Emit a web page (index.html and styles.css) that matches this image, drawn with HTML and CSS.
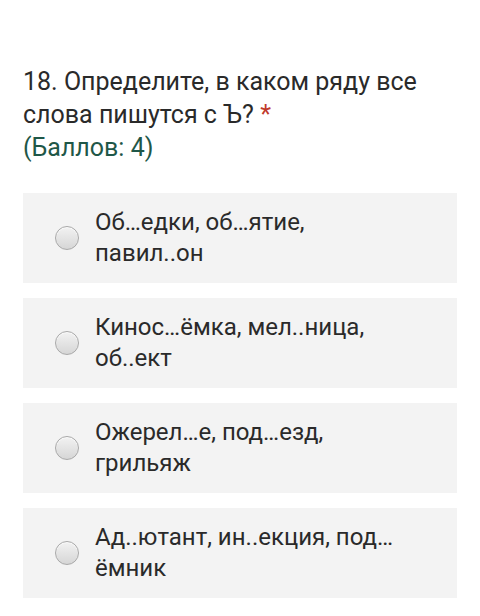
FILE: index.html
```html
<!DOCTYPE html>
<html lang="ru">
<head>
<meta charset="utf-8">
<link rel="stylesheet" href="styles.css">
</head>
<body>
<div class="page">
  <div class="question">
    <div class="title">18. Определите, в каком ряду все слова пишутся с Ъ? <span class="req">*</span></div>
    <div class="points">(Баллов: 4)</div>
  </div>
  <div class="options">
    <label class="option"><span class="radio"></span><span class="text">Об…едки, об…ятие, павил..он</span></label>
    <label class="option"><span class="radio"></span><span class="text">Кинос…ёмка, мел..ница, об..ект</span></label>
    <label class="option"><span class="radio"></span><span class="text">Ожерел…е, под…езд, грильяж</span></label>
    <label class="option"><span class="radio"></span><span class="text">Ад..ютант, ин..екция, под… ёмник</span></label>
  </div>
</div>
</body>
</html>
```

FILE: styles.css
```css
html, body {
  margin: 0;
  padding: 0;
  background: #ffffff;
}
body {
  font-family: Roboto, "Noto Sans", sans-serif;
  color: #2a2a2a;
}
.page {
  padding: 65px 23px 0 23px;
}
.question {
  font-size: 25px;
  line-height: 33px;
  padding-right: 20px;
}
.req {
  color: #c0392b;
}
.points {
  color: #1f5748;
}
.options {
  margin-top: 29px;
  display: flex;
  flex-direction: column;
  gap: 15px;
}
.option {
  background: #f3f3f3;
  height: 90px;
  box-sizing: border-box;
  display: flex;
  align-items: center;
  padding: 0 48px 0 32px;
}
.radio {
  flex: none;
  width: 22px;
  height: 22px;
  border-radius: 50%;
  border: 1px solid #a9a9a9;
  background: linear-gradient(#f2f2f2, #d6d6d6);
  box-shadow: inset 0 1px 1px rgba(255,255,255,0.8);
  margin-right: 16px;
}
.text {
  font-size: 24px;
  line-height: 31px;
}
```
